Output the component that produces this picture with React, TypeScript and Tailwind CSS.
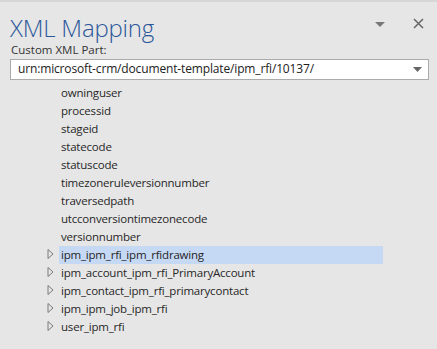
import React from "react";

const leaf = [
  "owninguser",
  "processid",
  "stageid",
  "statecode",
  "statuscode",
  "timezoneruleversionnumber",
  "traversedpath",
  "utcconversiontimezonecode",
  "versionnumber",
];
const nodes = [
  "ipm_ipm_rfi_ipm_rfidrawing",
  "ipm_account_ipm_rfi_PrimaryAccount",
  "ipm_contact_ipm_rfi_primarycontact",
  "ipm_ipm_job_ipm_rfi",
  "user_ipm_rfi",
];

function Tri() {
  return (
    <svg width="7" height="10" viewBox="0 0 7 10" className="shrink-0 -mt-[1px]">
      <path d="M1 0.5 L6 5 L1 9.5 Z" fill="none" stroke="#7a7a7a" strokeWidth="1" />
    </svg>
  );
}

export default function App() {
  return (
    <div
      className="w-[437px] h-[349px] bg-[#e6e6e6] border-t-2 border-[#d6d6d6] overflow-hidden relative"
      style={{ fontFamily: '"Open Sans", "Noto Sans", sans-serif' }}
    >
      <div className="flex items-start pl-[10px] pt-[12px] h-[42px]">
        <div className="text-[24px] font-light text-[#2b579a] leading-none tracking-[-0.2px] mt-[2px]">
          XML Mapping
        </div>
        <div className="flex-1" />
        <svg width="10" height="6" viewBox="0 0 10 6" className="mr-[28px] mt-[8px]">
          <path d="M0 0 L10 0 L5 5 Z" fill="#777" />
        </svg>
        <svg width="11" height="11" viewBox="0 0 11 11" className="mr-[13px] mt-[4px]">
          <path d="M1 1 L10 10 M10 1 L1 10" stroke="#6a6a6a" strokeWidth="1.6" />
        </svg>
      </div>
      <div className="pl-[11px] text-[11.5px] leading-none text-[#333]">Custom XML Part:</div>
      <div className="mx-[10px] mt-[3px] w-[419px] h-[21px] bg-white border border-[#ababab] flex items-center pl-[7px] pr-[6px]">
        <div className="flex-1 text-[12px] tracking-[-0.15px] text-[#222] leading-none">
          urn:microsoft-crm/document-template/ipm_rfi/10137/
        </div>
        <svg width="9" height="5" viewBox="0 0 9 5">
          <path d="M0 0 L9 0 L4.5 5 Z" fill="#666" />
        </svg>
      </div>
      <div className="mt-[4px] flex flex-col text-[11.5px] tracking-[-0.2px] text-[#262626]">
        {leaf.map((t) => (
          <div key={t} className="h-[18px] flex items-center pl-[61px]">
            {t}
          </div>
        ))}
        {nodes.map((t, i) => (
          <div key={t} className="h-[18px] flex items-center pl-[47px]">
            <Tri />
            <div
              className={
                "h-[18px] flex items-center pl-[2px] ml-[5px] " +
                (i === 0 ? "bg-[#c5d8f4] w-[324px]" : "")
              }
            >
              {t}
            </div>
          </div>
        ))}
      </div>
    </div>
  );
}
